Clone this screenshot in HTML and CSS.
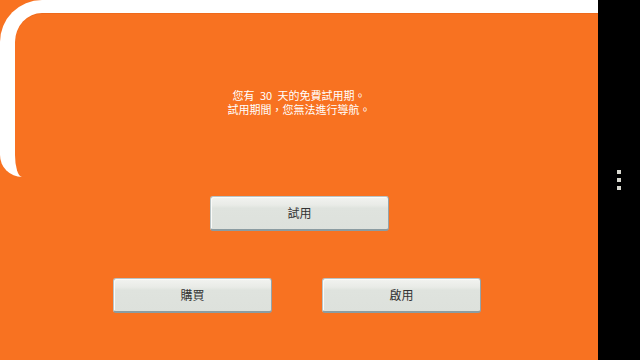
FILE: index.html
```html
<!DOCTYPE html>
<html>
<head>
<meta charset="utf-8">
<title>試用</title>
<link rel="stylesheet" href="styles.css">
</head>
<body>
  <div id="screen">
    <div id="main">
      <div id="frame">
        <div class="notice">
          <p>您有 30 天的免費試用期。</p>
          <p>試用期間，您無法進行導航。</p>
        </div>
      </div>
      <div class="row first">
        <button class="btn wide">試用</button>
      </div>
      <div class="row">
        <button class="btn">購買</button>
        <button class="btn">啟用</button>
      </div>
    </div>
    <div id="navbar">
      <span class="dot"></span>
      <span class="dot"></span>
      <span class="dot"></span>
    </div>
  </div>
</body>
</html>
```
FILE: styles.css
```css
body, html {
  margin: 0;
  padding: 0;
}

body {
  width: 640px;
  height: 360px;
  overflow: hidden;
  background: #000;
  font-family: "Noto Sans CJK TC", "Noto Sans", sans-serif;
}

#screen {
  display: flex;
  height: 360px;
}

#main {
  width: 598px;
  background: #f87221;
}

#navbar {
  width: 42px;
  background: #000;
  display: flex;
  flex-direction: column;
  align-items: center;
  justify-content: center;
  gap: 4px;
}

.dot {
  width: 4px;
  height: 4px;
  background: #d8d8d0;
}

#frame {
  box-sizing: border-box;
  height: 177px;
  border-top: 13px solid #fff;
  border-left: 15px solid #fff;
  border-radius: 42px 0 0 22px;
  padding: 75px 15px 0 0;
  box-shadow: inset 0 1px 0 #ee6a1c;
}

.notice {
  color: #fff;
  font-size: 11px;
  text-align: center;
  word-spacing: 3px;
}

.notice p {
  margin: 0;
  height: 14px;
  line-height: 14px;
}

.row {
  display: flex;
  justify-content: center;
  gap: 50px;
  margin-top: 47px;
  padding-right: 4px;
}

.row.first {
  margin-top: 19px;
  padding-right: 0;
  padding-left: 1px;
}

.btn {
  box-sizing: border-box;
  width: 159px;
  height: 35px;
  padding: 0;
  border: 1px solid #b9c4c6;
  border-right-color: #94a4aa;
  border-bottom: 2px solid #8b9ca2;
  border-radius: 3px;
  background: linear-gradient(#f2f3f0 0%, #e9ebe7 25%, #dfe3de 35%, #dde1dc 100%);
  box-shadow: inset 1px 1px 0 #fafbf9;
  color: #333;
  font-family: "Noto Sans CJK TC", "Noto Sans", sans-serif;
  font-size: 12px;
  line-height: 32px;
}

.btn.wide {
  width: 179px;
}
```
